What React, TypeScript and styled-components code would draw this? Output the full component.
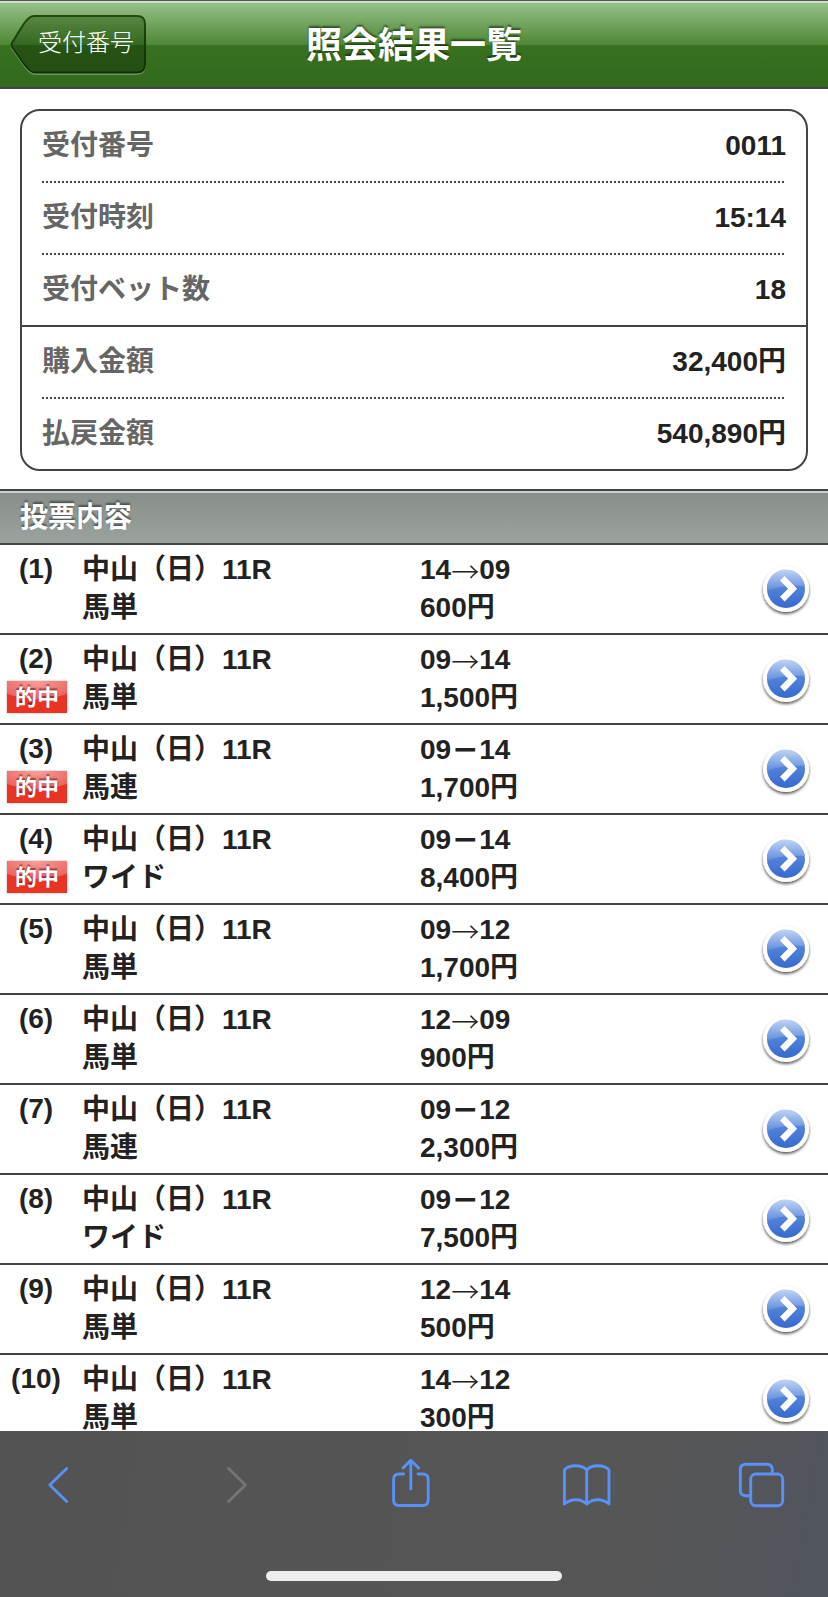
import React from "react";
import styled, { createGlobalStyle } from "styled-components";

const GlobalStyle = createGlobalStyle`
  * { box-sizing: border-box; }
  html, body { margin: 0; padding: 0; background: #fff; }
  body {
    font-family: "Liberation Sans", "Noto Sans CJK JP", sans-serif;
    font-weight: 700;
    font-size: 28px;
    color: #222;
  }
`;

const Screen = styled.div`
  width: 828px;
  height: 1597px;
  display: flex;
  flex-direction: column;
  overflow: hidden;
  background: #fff;
`;

const Page = styled.main`
  flex: 1;
  min-height: 0;
  overflow: hidden;
`;

const Header = styled.header`
  height: 89px;
  border-top: 1px solid #555;
  border-bottom: 2px solid #444;
  background: linear-gradient(#d0e0c8 0 2px, #97c088 2px, #4d8734 44px, #387220 44px, #32691d 100%);
  display: grid;
  grid-template-columns: 150px 1fr 150px;
`;

const BackButton = styled.button`
  position: relative;
  width: 137px;
  height: 61px;
  margin: 13px 0 0 10px;
  padding: 0 0 7px 28px;
  border: 0;
  background: none;
  color: #fff;
  font: 300 24px/54px "Noto Sans CJK JP", sans-serif;
  text-align: left;
`;

const BackShape = styled.svg`
  position: absolute;
  left: 0;
  top: 0;
`;

const BackLabel = styled.span`
  position: relative;
  display: block;
`;

const Title = styled.h1`
  margin: 0;
  font-size: 36px;
  line-height: 90px;
  height: 86px;
  text-align: center;
  color: #fff;
  text-shadow: 0 -2px 2px rgba(0, 0, 0, 0.5);
`;

const Card = styled.section`
  margin: 20px 20px 18px;
  height: 362px;
  border: 2px solid #444;
  border-radius: 20px;
`;

const InfoRow = styled.div<{ $line: "dotted" | "solid" | "none" }>`
  height: 72px;
  padding: 0 20px 2px;
  display: flex;
  align-items: center;
  justify-content: space-between;
  line-height: 70px;
  background: ${(p) =>
    p.$line === "dotted"
      ? "repeating-linear-gradient(90deg, #444 0 2px, transparent 2px 4px) 20px 100% / 744px 2px no-repeat"
      : p.$line === "solid"
        ? "linear-gradient(#444, #444) 0 100% / 100% 2px no-repeat"
        : "none"};
`;

const InfoLabel = styled.span`
  color: #666;
`;

const InfoValue = styled.span`
  color: #222;
`;

const SectionTitle = styled.h2`
  margin: 0;
  height: 56px;
  padding-left: 20px;
  border-top: 2px solid #444;
  border-bottom: 2px solid #444;
  background: linear-gradient(#c6d2ce 0 2px, #888e89 2px, #9ca29e 100%);
  font-size: 28px;
  line-height: 53px;
  color: #fff;
  text-shadow: 0 -2px 2px rgba(0, 0, 0, 0.45);
`;

const BetRow = styled.div`
  height: 90px;
  border-bottom: 2px solid #444;
  display: grid;
  grid-template-columns: 72px 338px 1fr 72px;
  line-height: 38px;
`;

const IndexCell = styled.div`
  display: flex;
  flex-direction: column;
  align-items: center;
  padding-top: 5px;
`;

const HitBadge = styled.span`
  width: 60px;
  height: 32px;
  margin: 3px 0 0 2px;
  background:
    radial-gradient(ellipse 44px 18px at 50% 0, #f4a09c 0, #ec645e 97%, transparent 100%),
    #e93323;
  box-shadow: 0 0 2px rgba(0, 0, 0, 0.35);
  color: #fff;
  font-size: 22px;
  line-height: 33px;
  text-align: center;
  text-shadow: 0 -2px 1px rgba(90, 0, 0, 0.5);
`;

const Cell = styled.div`
  padding: 6px 0 0 10px;
`;

const Line = styled.div`
  height: 38px;
  display: flex;
  white-space: nowrap;
`;

const Arrow = styled.span`
  width: 28px;
  font-family: "Noto Sans CJK JP", sans-serif;
  font-weight: 300;
  line-height: 40px;
`;

const Dash = styled.span`
  width: 28px;
  font-family: "Noto Sans CJK JP", sans-serif;
  font-weight: 900;
  line-height: 36px;
`;

const Disclosure = styled.div`
  width: 60px;
  height: 60px;
  margin-top: 14px;
`;

const Toolbar = styled.nav`
  height: 166px;
  flex: none;
  background: linear-gradient(100deg, #535353 0%, #565656 75%, #51555d 100%);
  display: flex;
  flex-direction: column;
  align-items: center;
  justify-content: space-between;
  padding-bottom: 16px;
`;

const Tools = styled.div`
  width: 100%;
  height: 108px;
  display: flex;
  justify-content: space-between;
  padding: 0 30px;
`;

const Tool = styled.svg<{ $dim?: boolean }>`
  width: 60px;
  height: 108px;
  fill: none;
  stroke: ${(p) => (p.$dim ? "#757575" : "#5891f8")};
  stroke-width: 2.9;
  stroke-linecap: round;
  stroke-linejoin: round;
`;

const HomeBar = styled.div`
  width: 296px;
  height: 10px;
  border-radius: 5px;
  background: #eee;
`;

type Bet = { kind: string; a: string; sep: "→" | "－"; b: string; yen: string; hit?: boolean };

const bets: Bet[] = [
  { kind: "馬単", a: "14", sep: "→", b: "09", yen: "600" },
  { kind: "馬単", a: "09", sep: "→", b: "14", yen: "1,500", hit: true },
  { kind: "馬連", a: "09", sep: "－", b: "14", yen: "1,700", hit: true },
  { kind: "ワイド", a: "09", sep: "－", b: "14", yen: "8,400", hit: true },
  { kind: "馬単", a: "09", sep: "→", b: "12", yen: "1,700" },
  { kind: "馬単", a: "12", sep: "→", b: "09", yen: "900" },
  { kind: "馬連", a: "09", sep: "－", b: "12", yen: "2,300" },
  { kind: "ワイド", a: "09", sep: "－", b: "12", yen: "7,500" },
  { kind: "馬単", a: "12", sep: "→", b: "14", yen: "500" },
  { kind: "馬単", a: "14", sep: "→", b: "12", yen: "300" },
];

const info: { label: string; value: string; line: "dotted" | "solid" | "none" }[] = [
  { label: "受付番号", value: "0011", line: "dotted" },
  { label: "受付時刻", value: "15:14", line: "dotted" },
  { label: "受付ベット数", value: "18", line: "solid" },
  { label: "購入金額", value: "32,400円", line: "dotted" },
  { label: "払戻金額", value: "540,890円", line: "none" },
];

function BackOutline() {
  const d = "M24 2 H127 Q135 2 135 10 V50 Q135 58.5 127 58.5 H24 C21 58.5 17 54 14 50 L2 33 Q1 31 2 29 L13 11 C17 5 20 2 24 2 Z";
  return (
    <BackShape width="137" height="61" viewBox="0 0 137 61">
      <defs>
        <linearGradient id="backFill" x1="0" y1="0" x2="0" y2="1">
          <stop offset="0" stopColor="#588744" />
          <stop offset="0.52" stopColor="#34681f" />
          <stop offset="0.52" stopColor="#265414" />
          <stop offset="1" stopColor="#234f12" />
        </linearGradient>
        <linearGradient id="backEdge" x1="0" y1="0" x2="0" y2="1">
          <stop offset="0" stopColor="#224a10" />
          <stop offset="1" stopColor="#122d08" />
        </linearGradient>
      </defs>
      <path d={d} transform="translate(0 1.3)" fill="none" stroke="#79a568" strokeWidth="1.8" />
      <path d={d} fill="url(#backFill)" stroke="url(#backEdge)" strokeWidth="2" />
    </BackShape>
  );
}

function DisclosureIcon() {
  return (
    <Disclosure>
      <svg width="60" height="60" viewBox="0 0 60 60">
        <defs>
          <linearGradient id="ball" x1="0" y1="0" x2="0" y2="1">
            <stop offset="0" stopColor="#5a8be0" />
            <stop offset="0.5" stopColor="#5080d8" />
            <stop offset="1" stopColor="#376acf" />
          </linearGradient>
          <linearGradient id="gloss" x1="0" y1="0" x2="0" y2="1">
            <stop offset="0" stopColor="#c2d4f3" />
            <stop offset="1" stopColor="#5d8bde" />
          </linearGradient>
          <filter id="drop" x="-20%" y="-20%" width="140%" height="150%">
            <feDropShadow dx="0" dy="2" stdDeviation="1.8" floodColor="#000" floodOpacity="0.65" />
          </filter>
        </defs>
        <circle cx="30" cy="30" r="23" fill="#fff" filter="url(#drop)" />
        <circle cx="30" cy="30" r="19" fill="url(#ball)" />
        <path d="M11 32 A19 19 0 1 1 48.8 27 Q24 26 11 32 Z" fill="url(#gloss)" />
        <path d="M26.3 19.3 L36.6 29.7 L26.3 40.1" fill="none" stroke="#fff" strokeWidth="6.5" />
      </svg>
    </Disclosure>
  );
}

export default function App() {
  return (
    <Screen>
      <GlobalStyle />
      <Page>
        <Header>
          <BackButton>
            <BackOutline />
            <BackLabel>受付番号</BackLabel>
          </BackButton>
          <Title>照会結果一覧</Title>
        </Header>
        <Card>
          {info.map((r) => (
            <InfoRow key={r.label} $line={r.line}>
              <InfoLabel>{r.label}</InfoLabel>
              <InfoValue>{r.value}</InfoValue>
            </InfoRow>
          ))}
        </Card>
        <SectionTitle>投票内容</SectionTitle>
        {bets.map((b, i) => (
          <BetRow key={i}>
            <IndexCell>
              <Line>{`(${i + 1})`}</Line>
              {b.hit && <HitBadge>的中</HitBadge>}
            </IndexCell>
            <Cell>
              <Line>中山（日）11R</Line>
              <Line>{b.kind}</Line>
            </Cell>
            <Cell>
              <Line>
                {b.a}
                {b.sep === "→" ? <Arrow>→</Arrow> : <Dash>{b.sep}</Dash>}
                {b.b}
              </Line>
              <Line>{b.yen}円</Line>
            </Cell>
            <DisclosureIcon />
          </BetRow>
        ))}
      </Page>
      <Toolbar>
        <Tools>
          <Tool viewBox="0 0 60 108">
            <path d="M36.7 37.5 L19.8 54 L36.7 70.5" />
          </Tool>
          <Tool viewBox="0 0 60 108" $dim>
            <path d="M21.5 37.5 L38.5 54 L21.5 70.5" />
          </Tool>
          <Tool viewBox="0 0 60 108">
            <path d="M19.5 43 H15 Q9.6 43 9.6 48.5 V69 Q9.6 74.5 15 74.5 H38.7 Q44.2 74.5 44.2 69 V48.5 Q44.2 43 38.7 43 H34" />
            <path d="M26.8 58 V29.5 M19 37 L26.8 29.3 L34.6 37" />
          </Tool>
          <Tool viewBox="0 0 60 108">
            <path d="M25.7 39 V73 C20 67.3 10 67.3 3.4 73 V39 C8 33.3 21 33.3 25.7 39 C30.4 33.3 43.4 33.3 48 39 V73 C41.4 67.3 31.4 67.3 25.7 73" />
          </Tool>
          <Tool viewBox="0 0 60 108">
            <path d="M12 64.7 H8 Q2.3 64.7 2.3 59.2 V38.8 Q2.3 33.3 8 33.3 H28.7 Q34.3 33.3 34.3 38.8 V42" />
            <rect x="12.7" y="43" width="32" height="31.7" rx="5" />
          </Tool>
        </Tools>
        <HomeBar />
      </Toolbar>
    </Screen>
  );
}
